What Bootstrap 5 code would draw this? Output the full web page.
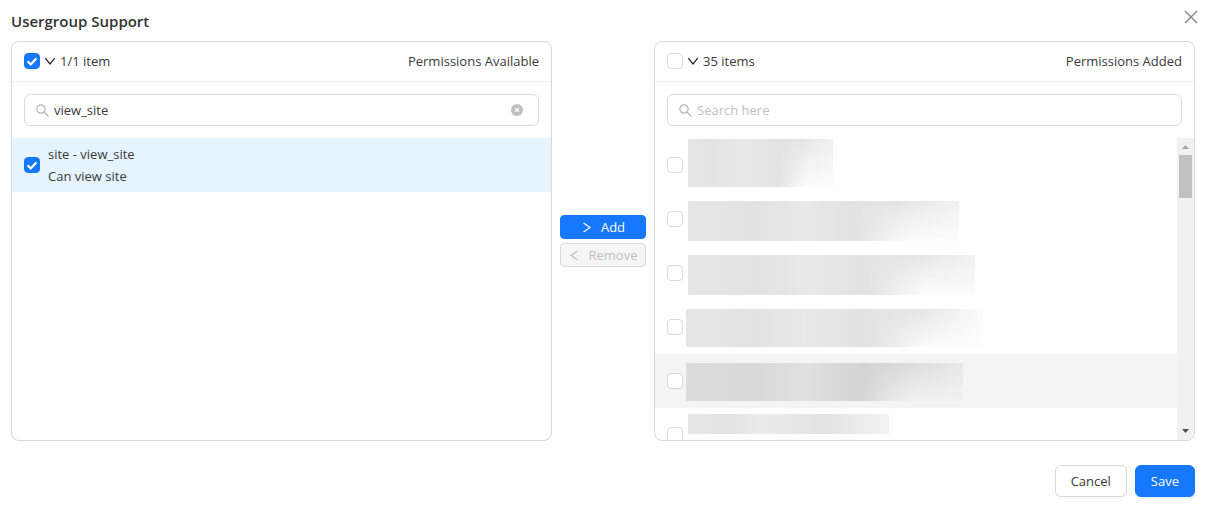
<!DOCTYPE html>
<html lang="en">
<head>
<meta charset="utf-8">
<meta name="viewport" content="width=device-width, initial-scale=1">
<title>Usergroup Support</title>
<link href="https://cdn.jsdelivr.net/npm/bootstrap@5.3.0/dist/css/bootstrap.min.css" rel="stylesheet">
<style>
  body { font-family: "Open Sans", "Noto Sans", sans-serif; font-size: 13px; line-height: 22px; color: #3a3a3a; background: #fff; }
  .dialog { padding: 9px 12px 15px 11px; }
  .dialog-title { font-size: 15px; line-height: 24px; font-weight: 600; color: #333; }
  .dialog-close { width: 22px; height: 22px; margin: -3px -7px 0 0; color: #8c8c8c; }
  .dialog-body { margin-top: 8px; }
  .panel { flex: 1 1 0; min-width: 0; height: 400px; border: 1px solid #d9d9d9; border-radius: 8px; overflow: hidden; }
  .panel-head { flex: none; height: 40px; padding: 0 12px 1px; border-bottom: 1px solid #f0f0f0; }
  .panel-search { flex: none; padding: 12px; }
  .search-box { height: 32px; padding: 0 15px 0 11px; gap: 5px; border: 1px solid #d9d9d9; border-radius: 6px; }
  .search-box input { flex: 1; min-width: 0; padding: 0; border: 0; outline: 0; background: none; color: #3a3a3a; line-height: 22px; }
  .search-box input::placeholder { color: #bfbfbf; opacity: 1; }
  .search-box .glass { color: #b5b5b5; }
  .tick.form-check-input { flex: none; width: 16px; height: 16px; margin: 0; border: 1px solid #d9d9d9; border-radius: 4px; background-color: #fff; }
  .tick.form-check-input:checked { background-color: #1677ff; border-color: #1677ff; background-size: 16px 16px; background-position: center;
    background-image: url("data:image/svg+xml,%3csvg xmlns='http://www.w3.org/2000/svg' viewBox='0 0 16 16'%3e%3cpath fill='none' stroke='%23fff' stroke-width='2.2' d='M3.5 8.200l3.200 3.200 5.600-6'/%3e%3c/svg%3e"); }
  .panel-list { min-height: 0; }
  .perm { padding: 0 12px; height: 54px; flex: none; }
  .perm.chosen { background: #e6f4ff; gap: 8px; }
  .perm.hovered { background: #f4f4f4; }
  .redacted { --paper: #fcfcfc; display: flex; align-self: flex-start; margin: 9px 0 0 5px; height: 40px;
    background: linear-gradient(90deg, #e5e5e5, #e2e2e2 25%, #e9e9e9 43%, #e2e2e2 60%, #e6e6e6 80%, #f1f1f1); }
  /* the second, shorter line of each hidden text leaves the lower right corner empty */
  .redacted::after { content: ""; flex: 1; background: linear-gradient(90deg, transparent 62%, var(--paper) 82%);
    -webkit-mask-image: linear-gradient(transparent, #000); mask-image: linear-gradient(transparent, #000); }
  .redacted.tall { margin-top: 1px; height: 48px;
    background: linear-gradient(90deg, #e5e5e5, #e3e3e3 15%, #e9e9e9 40%, #e2e2e2 62%, #e6e6e6 80%, #f1f1f1); }
  .redacted.near { margin-left: 3px; height: 38px; }
  .redacted.fade-out { background: linear-gradient(90deg, #e5e5e5, #e2e2e2 25%, #e9e9e9 40%, #e2e2e2 56%, #e6e6e6 80%, #fcfcfc); }
  .redacted.on-grey { --paper: #f1f1f1; background: linear-gradient(90deg, #dcdcdc, #d9d9d9 25%, #e0e0e0 44%, #d3d3d3 64%, #dddddd 82%, #e9e9e9); }
  .redacted.short { margin-top: 6px; height: 20px; --paper: transparent;
    background: linear-gradient(90deg, #e7e7e7, #e2e2e2 20%, #ebebeb 38%, #e2e2e2 68%, #f3f3f3); }
  .scroll-track { width: 17px; background: #f1f1f1; flex: none; }
  .scroll-track svg { flex: none; }
  .scroll-thumb { width: 13px; height: 43px; background: #c1c1c1; }
  .mover { width: 86px; margin: 0 8px; gap: 4px; flex: none; }
  .act { --bs-btn-font-size: 13px; --bs-btn-line-height: 22px; --bs-btn-border-radius: 6px; height: 32px; padding: 0 15px; }
  .act.slim { --bs-btn-border-radius: 4px; height: 24px; padding: 0 7px; gap: 8px; }
  .act-blue { --bs-btn-color: #fff; --bs-btn-bg: #1677ff; --bs-btn-border-color: #1677ff; --bs-btn-hover-color: #fff; --bs-btn-hover-bg: #4096ff; font-weight: 500; }
  .act-plain { --bs-btn-color: #3a3a3a; --bs-btn-bg: #fff; --bs-btn-border-color: #d9d9d9; --bs-btn-hover-border-color: #4096ff;
    --bs-btn-disabled-color: #bfbfbf; --bs-btn-disabled-bg: #f5f5f5; --bs-btn-disabled-border-color: #d9d9d9; --bs-btn-disabled-opacity: 1; }
  .dialog-foot { margin-top: 24px; }
  .dialog-foot .act { box-shadow: 0 2px 0 #00000005; }
  .dialog-foot .act-blue { box-shadow: 0 2px 0 #0591ff1a; }
</style>
</head>
<body>
<main class="dialog">
  <header class="d-flex justify-content-between align-items-start">
    <h1 class="dialog-title m-0">Usergroup Support</h1>
    <button type="button" class="dialog-close btn p-0 border-0 d-flex align-items-center justify-content-center" aria-label="Close">
      <svg width="14" height="14" viewBox="0 0 14 14" fill="none" stroke="currentColor" stroke-width="1.5"><path d="M1 1l12 12M13 1L1 13"/></svg>
    </button>
  </header>

  <div class="dialog-body d-flex align-items-center">
    <section class="panel d-flex flex-column">
      <div class="panel-head d-flex align-items-center">
        <input class="form-check-input tick" type="checkbox" id="allAvailable" checked aria-label="Select all available">
        <svg class="mx-1" width="12" height="12" viewBox="0 0 12 12" fill="none" stroke="#222" stroke-width="1.2"><path d="M1.3 3.2L6 9l4.7-5.8"/></svg>
        <label for="allAvailable">1/1 item</label>
        <span class="ms-auto">Permissions Available</span>
      </div>
      <div class="panel-search">
        <div class="search-box d-flex align-items-center">
          <svg class="glass" width="13" height="13" viewBox="0 0 13 13" fill="none" stroke="currentColor" stroke-width="1.2"><circle cx="5" cy="5" r="4.2"/><path d="M8 8l4.5 4.5"/></svg>
          <input type="text" value="view_site" aria-label="Search available permissions">
          <button type="button" class="btn p-0 border-0 d-flex" aria-label="Clear">
            <svg width="12" height="12" viewBox="0 0 12 12"><circle cx="6" cy="6" r="6" fill="#bfbfbf"/><path d="M4 4l4 4M8 4L4 8" stroke="#fff" stroke-width="1.1"/></svg>
          </button>
        </div>
      </div>
      <div class="panel-list flex-fill">
        <div class="perm chosen d-flex align-items-center">
          <input class="form-check-input tick" type="checkbox" id="viewSite" checked>
          <label for="viewSite">site - view_site<br>Can view site</label>
        </div>
      </div>
    </section>

    <div class="mover d-flex flex-column">
      <button type="button" class="btn act act-blue slim d-flex align-items-center justify-content-center">
        <svg width="12" height="12" viewBox="0 0 12 12" fill="none" stroke="currentColor" stroke-width="1.2"><path d="M2.500 2l6.500 4.500L2.500 11"/></svg>
        Add
      </button>
      <button type="button" class="btn act act-plain slim d-flex align-items-center justify-content-center" disabled>
        <svg width="12" height="12" viewBox="0 0 12 12" fill="none" stroke="currentColor" stroke-width="1.2"><path d="M8.500 2L2 6.500 8.500 11"/></svg>
        Remove
      </button>
    </div>

    <section class="panel d-flex flex-column">
      <div class="panel-head d-flex align-items-center">
        <input class="form-check-input tick" type="checkbox" id="allAdded" aria-label="Select all added">
        <svg class="mx-1" width="12" height="12" viewBox="0 0 12 12" fill="none" stroke="#222" stroke-width="1.2"><path d="M1.3 3.2L6 9l4.7-5.8"/></svg>
        <label for="allAdded">35 items</label>
        <span class="ms-auto">Permissions Added</span>
      </div>
      <div class="panel-search">
        <div class="search-box d-flex align-items-center">
          <svg class="glass" width="13" height="13" viewBox="0 0 13 13" fill="none" stroke="currentColor" stroke-width="1.2"><circle cx="5" cy="5" r="4.2"/><path d="M8 8l4.5 4.5"/></svg>
          <input type="text" placeholder="Search here" aria-label="Search added permissions">
        </div>
      </div>
      <div class="panel-list flex-fill d-flex">
        <div class="flex-fill d-flex flex-column overflow-hidden">
          <div class="perm d-flex align-items-center"><input class="form-check-input tick" type="checkbox" aria-label="Permission 1"><div class="redacted tall" style="width:145px"></div></div>
          <div class="perm d-flex align-items-center"><input class="form-check-input tick" type="checkbox" aria-label="Permission 2"><div class="redacted" style="width:271px"></div></div>
          <div class="perm d-flex align-items-center"><input class="form-check-input tick" type="checkbox" aria-label="Permission 3"><div class="redacted" style="width:287px"></div></div>
          <div class="perm d-flex align-items-center"><input class="form-check-input tick" type="checkbox" aria-label="Permission 4"><div class="redacted near fade-out" style="width:297px"></div></div>
          <div class="perm hovered d-flex align-items-center"><input class="form-check-input tick" type="checkbox" aria-label="Permission 5"><div class="redacted near on-grey" style="width:277px"></div></div>
          <div class="perm d-flex align-items-center"><input class="form-check-input tick" type="checkbox" aria-label="Permission 6"><div class="redacted short" style="width:201px"></div></div>
        </div>
        <div class="scroll-track d-flex flex-column align-items-center" aria-hidden="true">
          <svg width="17" height="17" viewBox="0 0 17 17"><path d="M5 11l3.500-4 3.500 4z" fill="#a3a3a3"/></svg>
          <div class="scroll-thumb"></div>
          <svg class="mt-auto" width="17" height="17" viewBox="0 0 17 17"><path d="M5 6l3.500 4L12 6z" fill="#505050"/></svg>
        </div>
      </div>
    </section>
  </div>

  <footer class="dialog-foot d-flex justify-content-end gap-2">
    <button type="button" class="btn act act-plain">Cancel</button>
    <button type="button" class="btn act act-blue">Save</button>
  </footer>
</main>
<script src="https://cdn.jsdelivr.net/npm/bootstrap@5.3.0/dist/js/bootstrap.bundle.min.js"></script>
</body>
</html>
